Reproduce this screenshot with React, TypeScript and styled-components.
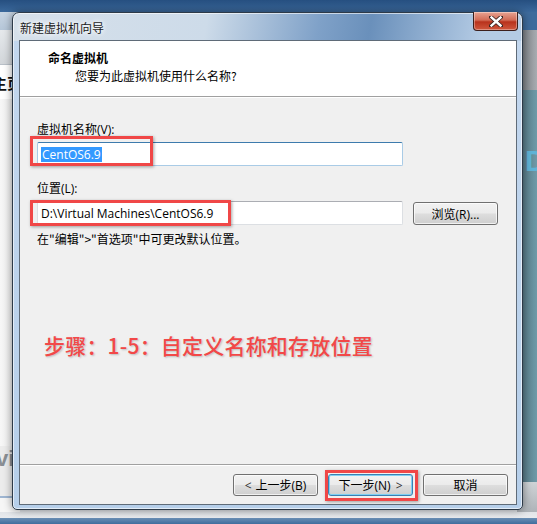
import React from "react";
import styled, { createGlobalStyle } from "styled-components";

const Global = createGlobalStyle`
  html, body { margin: 0; padding: 0; }
  body { width: 537px; height: 524px; overflow: hidden; }
`;

const UI_FONT = `"Open Sans", "Noto Sans CJK SC", sans-serif`;

const Desktop = styled.div`
  position: relative;
  width: 537px;
  height: 524px;
  box-sizing: border-box;
  padding: 12px 14px 14px 12px;
  overflow: hidden;
  font-family: ${UI_FONT};
  background:
    linear-gradient(to bottom, #264f80 0, #3b699c 12px, transparent 12px),
    linear-gradient(to top, #3f6d9d 0, #6b8fb5 6px, #e9ebee 6px, #dfe2e6 14px, transparent 14px),
    #d9dde2;
`;

const BackWindowLeft = styled.div`
  position: absolute;
  left: 0;
  top: 12px;
  width: 20px;
  height: 500px;
  display: flex;
  flex-direction: column;
  background: #f4f5f6;
`;

const BackToolbar = styled.div`
  height: 18px;
  background: linear-gradient(to bottom, #c8d5e3, #b5c6d8);
`;

const BackTabs = styled.div`
  height: 34px;
  background: linear-gradient(to bottom, #e6e9ec, #d2d6da);
  border-bottom: 1px solid #b9c0c8;
`;

const BackHeading = styled.div`
  height: 34px;
  display: flex;
  align-items: center;
  font-weight: bold;
  font-size: 15px;
  color: #111;
  font-family: "Noto Sans CJK SC", sans-serif;
  white-space: nowrap;
  margin-left: -8px;
  background: #fff;
`;

const BackSpacer = styled.div`
  flex: 1;
  background: linear-gradient(to right, #f7f7f7, #e8e8e8);
`;

const BackLogo = styled.div`
  height: 26px;
  display: flex;
  align-items: center;
  font-size: 22px;
  font-weight: bold;
  color: #8a8f94;
  margin-left: -4px;
  font-family: "Liberation Sans", sans-serif;
  background: #ececec;
`;

const BackFooter = styled.div`
  height: 40px;
  background: linear-gradient(to bottom, #ececec 0, #ececec 24px, #9fb6d2 24px, #9fb6d2 26px, #f6f6f6 26px);
`;

const BackWindowRight = styled.div`
  position: absolute;
  right: 0;
  top: 12px;
  width: 20px;
  height: 500px;
  display: flex;
  flex-direction: column;
`;

const BackRightTop = styled.div`
  height: 18px;
  background: #3e6b9c;
`;

const BackRightBar = styled.div`
  height: 60px;
  background: linear-gradient(to right, #6d7175, #a7acb1);
`;

const BackRightBody = styled.div`
  flex: 1;
  position: relative;
  background: linear-gradient(to right, #4f6f7b, #6f9aa8);
`;

const BackRightGlyph = styled.span`
  position: absolute;
  left: 8px;
  top: 54px;
  font-size: 30px;
  font-weight: bold;
  color: #5fb3d6;
  font-family: "Liberation Sans", sans-serif;
`;

const BackRightBottom = styled.div`
  height: 30px;
  background: linear-gradient(to bottom, #cfd3d6, #aeb3b8);
`;

const Window = styled.div`
  position: relative;
  z-index: 1;
  width: 511px;
  height: 498px;
  box-sizing: border-box;
  display: flex;
  flex-direction: column;
  border: 1px solid #2d3a48;
  border-radius: 7px 7px 5px 5px;
  background:
    linear-gradient(100deg, #d6e0ea 0%, #cddbe9 38%, #7fa1c8 60%, #6a90bb 70%, #b4cbe4 92%) top / 100% 28px no-repeat,
    linear-gradient(to bottom, #c3d7ee, #b6cfea);
  box-shadow: 0 0 8px rgba(0, 0, 0, 0.45), inset 0 0 0 1px rgba(255, 255, 255, 0.6);
  padding: 0 5px 4px 6px;
`;

const TitleBar = styled.div`
  height: 27px;
  display: flex;
  align-items: flex-start;
  justify-content: space-between;
`;

const TitleText = styled.span`
  margin-top: 7px;
  margin-left: 1px;
  font-size: 12px;
  line-height: 16px;
  color: #1a1a1a;
  font-family: "Noto Sans CJK SC", sans-serif;
  text-shadow: 0 0 6px #fff, 0 0 4px #fff;
`;

const CloseButton = styled.div`
  width: 45px;
  height: 19px;
  margin-top: -1px;
  margin-right: -1px;
  box-sizing: border-box;
  border: 1px solid #3c1f1c;
  border-top: none;
  border-radius: 0 0 4px 4px;
  display: flex;
  align-items: center;
  justify-content: center;
  background: linear-gradient(to bottom, #e8a493 0%, #d26b55 45%, #b8321c 55%, #d0583e 100%);
  box-shadow: inset 0 0 0 1px rgba(255, 255, 255, 0.35);
`;

const Client = styled.div`
  flex: 1;
  display: flex;
  flex-direction: column;
  border: 1px solid #5f6b78;
  background: #f0f0f0;
`;

const Header = styled.div`
  height: 56px;
  box-sizing: border-box;
  background: #fff;
  border-bottom: 1px solid #a0a0a0;
  padding: 9px 0 0 28px;
  display: flex;
  flex-direction: column;
  font-family: "Noto Sans CJK SC", sans-serif;
`;

const HeaderTitle = styled.div`
  font-size: 12px;
  font-weight: bold;
  line-height: 16px;
  color: #000;
`;

const HeaderSub = styled.div`
  font-size: 12px;
  line-height: 16px;
  margin-top: 2px;
  margin-left: 27px;
  color: #000;
`;

const Body = styled.div`
  flex: 1;
  position: relative;
  display: flex;
  flex-direction: column;
  padding: 24px 18px 0 17px;
  border-top: 1px solid #fff;
`;

const Label = styled.div<{ $top?: number }>`
  font-size: 12px;
  line-height: 16px;
  color: #000;
  margin-top: ${(p) => p.$top ?? 0}px;
`;

const FieldRow = styled.div<{ $top?: number }>`
  display: flex;
  align-items: center;
  gap: 10px;
  margin-top: ${(p) => p.$top ?? 0}px;
`;

const FieldWrap = styled.div`
  position: relative;
  width: 366px;
  height: 24px;
`;

const Input = styled.div<{ $focused?: boolean }>`
  width: 100%;
  height: 100%;
  box-sizing: border-box;
  background: #fff;
  border: 1px solid ${(p) => (p.$focused ? "#a9cbe6" : "#dcdfe3")};
  border-top-color: ${(p) => (p.$focused ? "#3d7bad" : "#abadb3")};
  border-radius: 2px;
  padding: 0 0 0 3px;
  display: flex;
  align-items: center;
  font-size: 12px;
  color: #000;
  font-family: "Open Sans", "Noto Sans CJK SC", sans-serif;
`;

const Selected = styled.span`
  background: #3399ff;
  color: #fff;
  padding: 0 1px;
  line-height: 15px;
`;

const RedBox = styled.div<{ $l: number; $t: number; $w: number; $h: number }>`
  position: absolute;
  left: ${(p) => p.$l}px;
  top: ${(p) => p.$t}px;
  width: ${(p) => p.$w}px;
  height: ${(p) => p.$h}px;
  box-sizing: border-box;
  border: 3px solid #f04747;
  box-shadow: 1px 1px 3px rgba(0, 0, 0, 0.35);
  pointer-events: none;
`;

const Button = styled.div<{ $default?: boolean }>`
  position: relative;
  width: 85px;
  height: 22px;
  box-sizing: border-box;
  border: 1px solid ${(p) => (p.$default ? "#3c7fb1" : "#707070")};
  border-radius: 3px;
  background: linear-gradient(to bottom, #f2f2f2 0%, #ebebeb 48%, #dddddd 52%, #cfcfcf 100%);
  box-shadow: inset 0 0 0 1px ${(p) => (p.$default ? "#7fd0f3" : "rgba(255,255,255,0.7)")};
  display: flex;
  align-items: center;
  justify-content: center;
  font-size: 12px;
  color: #000;
  font-family: "Open Sans", "Noto Sans CJK SC", sans-serif;
  white-space: nowrap;
`;

const BrowseButton = styled(Button)`
  height: 23px;
  margin-top: 1px;
`;

const Note = styled.div`
  font-size: 12px;
  line-height: 16px;
  margin-top: 6px;
  color: #000;
  font-family: "Noto Sans CJK SC", sans-serif;
`;

const Annotation = styled.div`
  margin-top: 85px;
  margin-left: 7px;
  font-size: 21px;
  line-height: 26px;
  font-weight: 500;
  color: #f24848;
  letter-spacing: 0.2px;
  font-family: "Noto Sans CJK SC", sans-serif;
  text-shadow: 1px 1px 2px rgba(0, 0, 0, 0.22);
`;

const Footer = styled.div`
  height: 40px;
  box-sizing: border-box;
  border-top: 1px solid #a0a0a0;
  box-shadow: inset 0 1px 0 #fff;
  display: flex;
  justify-content: flex-end;
  align-items: flex-start;
  gap: 10px;
  padding: 9px 8px 0 0;
`;

const Chevron = styled.span<{ $side: "l" | "r" }>`
  color: #333;
  ${(p) => (p.$side === "l" ? "margin-right: 4px;" : "margin-left: 5px;")}
`;

export default function App() {
  return (
    <>
      <Global />
      <Desktop>
        <BackWindowLeft>
          <BackToolbar />
          <BackTabs />
          <BackHeading>主页</BackHeading>
          <BackSpacer />
          <BackLogo>vi</BackLogo>
          <BackFooter />
        </BackWindowLeft>
        <BackWindowRight>
          <BackRightTop />
          <BackRightBar />
          <BackRightBody>
            <BackRightGlyph>D</BackRightGlyph>
          </BackRightBody>
          <BackRightBottom />
        </BackWindowRight>

        <Window>
          <TitleBar>
            <TitleText>新建虚拟机向导</TitleText>
            <CloseButton>
              <svg width="14" height="11" viewBox="0 0 14 11">
                <path
                  d="M2 1 L12 10 M12 1 L2 10"
                  stroke="#3a2420"
                  strokeWidth="4"
                  strokeLinecap="square"
                />
                <path
                  d="M2.5 1.5 L11.5 9.5 M11.5 1.5 L2.5 9.5"
                  stroke="#fff"
                  strokeWidth="2.4"
                  strokeLinecap="square"
                />
              </svg>
            </CloseButton>
          </TitleBar>
          <Client>
            <Header>
              <HeaderTitle>命名虚拟机</HeaderTitle>
              <HeaderSub>您要为此虚拟机使用什么名称?</HeaderSub>
            </Header>
            <Body>
              <Label>虚拟机名称(V):</Label>
              <FieldRow $top={4}>
                <FieldWrap>
                  <Input $focused>
                    <Selected>CentOS6.9</Selected>
                  </Input>
                  <RedBox $l={-7} $t={-6} $w={123} $h={30} />
                </FieldWrap>
              </FieldRow>
              <Label $top={15}>位置(L):</Label>
              <FieldRow $top={4}>
                <FieldWrap>
                  <Input>D:\Virtual Machines\CentOS6.9</Input>
                  <RedBox $l={-7} $t={-1} $w={201} $h={26} />
                </FieldWrap>
                <BrowseButton>浏览(R)...</BrowseButton>
              </FieldRow>
              <Note>在"编辑"&gt;"首选项"中可更改默认位置。</Note>
              <Annotation>步骤：1-5：自定义名称和存放位置</Annotation>
            </Body>
            <Footer>
              <Button>
                <Chevron $side="l">&lt;</Chevron>上一步(B)
              </Button>
              <Button $default>
                下一步(N)<Chevron $side="r">&gt;</Chevron>
                <RedBox $l={-4} $t={-5} $w={93} $h={31} />
              </Button>
              <Button>取消</Button>
            </Footer>
          </Client>
        </Window>
      </Desktop>
    </>
  );
}
